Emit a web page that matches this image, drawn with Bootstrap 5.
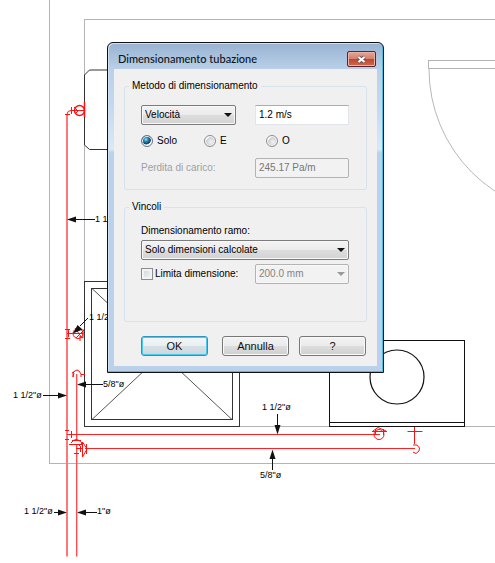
<!DOCTYPE html>
<html lang="it">
<head>
<meta charset="utf-8">
<meta name="viewport" content="width=device-width, initial-scale=1">
<title>Dimensionamento tubazione</title>
<link href="https://cdn.jsdelivr.net/npm/bootstrap@5.3.0/dist/css/bootstrap.min.css" rel="stylesheet">
<style>
  body { font-family: "Liberation Sans", Arial, sans-serif; font-size: 10px; line-height: 14px; color: #000; background: #fff; }
  .plan-wrap { min-height: 563px; }
  .plan text { font: 9px "Liberation Sans", sans-serif; fill: #000; white-space: pre; }
  .plan .crisp { shape-rendering: crispEdges; }
  /* window frame */
  .win { left: 107px; top: 42px; width: 277px; padding: 0 6px 6px; border: 1px solid #111; border-radius: 6px 6px 0 0;
    background: linear-gradient(#98b2d1 0, #bad1e9 27px, #c2d8ee 60px, #dbe8f5 106px, #b9d1ea 110px);
    box-shadow: inset -1px -1px 0 #3fc4e6, inset 1px 1px 0 #d3e2f1; }
  .win-title { height: 26px; padding: 4px 1px 0 4px; }
  .win-title h1 { font: 500 11px/16px Lato, "Noto Sans", sans-serif; color: #0c1420; padding-top: 4px; }
  .win-close { width: 29px; height: 16px; margin-top: 4px; border: 1px solid #5c2430; border-radius: 2px;
    background: linear-gradient(#e5a598 0, #d5806f 48%, #bd4630 52%, #cf6b4c 100%); box-shadow: inset 0 0 0 1px #e9b3a6; }
  .win-body { background: #f0f0f0; padding: 10px; }
  /* group boxes */
  .group { border: 1px solid #d8e2ea; border-radius: 3px; padding: 0 17px 0 16px; }
  .group legend { float: none; width: auto; font-size: 10px; line-height: 14px; margin: 0 0 0 -12px; padding: 0 3px; }
  .group-method { padding-top: 12px; padding-bottom: 11px; margin-bottom: 10px; }
  .group-limits { padding-top: 10px; padding-bottom: 37px; }
  .branch-row { margin: 2px 0 4px; }
  .pair { display: grid; grid-template-columns: minmax(0, 1fr) 94px; column-gap: 19px; align-items: center; }
  .choices { display: grid; grid-template-columns: 63px 62px 1fr; margin: 9px 0 10px; }
  .choices label, .limit label { display: flex; align-items: center; gap: 4px; }
  .limit label { gap: 2px; white-space: nowrap; }
  /* controls */
  .win .form-select, .win .form-control { height: 20px; min-height: 0; font-size: 10px; line-height: 14px; border-radius: 2px; color: #000; }
  .win .form-select { padding: 2px 16px 2px 3px; border: 1px solid #7b7b7b;
    background: linear-gradient(#f3f3f3, #ebebeb 48%, #dddddd 52%, #d2d2d2); box-shadow: inset 0 0 0 1px #f8f8f8; }
  .picker { position: relative; }
  .picker svg { position: absolute; right: 4px; top: 8px; pointer-events: none; }
  .win .form-select:disabled { color: #838383; border-color: #b3b3b3; background: #f2f2f2; opacity: 1; }
  .win .form-control { padding: 1px 2px 3px 3px; border: 1px solid #e2e5ea; border-top-color: #a9adb3; border-radius: 0; background: #fff; }
  .win .form-control:disabled { color: #777; background: #f2f2f2; border: 1px solid #b3b3b3; border-radius: 2px; opacity: 1; }
  .dim { color: #a0a0a0; }
  .win .form-check-input { width: 12px; height: 12px; margin: 0; flex: none; border: 1px solid #8d8d8d; background-color: #eee; box-shadow: inset 0 0 0 1px #f9f9f9; }
  .win .form-check-input[type=checkbox] { border-radius: 0; background-image: linear-gradient(135deg, #cfd3d8, #f6f6f6); box-shadow: inset 0 0 0 2px #f3f3f3; }
  .win .form-check-input[type=radio] { background-image: radial-gradient(circle at 60% 60%, #f4f4f4 0, #c9ced3 55%, #fafafa 60%); }
  .win .form-check-input[type=radio]:checked { border-color: #667380; background-color: #eef3f7;
    background-image: radial-gradient(circle at 40% 35%, #a5e4f6 0, #2583ae 25%, #123e63 52%, #eef3f7 60%); }
  .actions { display: grid; grid-template-columns: 81px 77px 67px; padding: 14px 0 0 17px; }
  .win .btn { width: 67px; height: 20px; padding: 0; font-size: 11px; line-height: 17px; color: #111; border: 1px solid #777; border-radius: 3px;
    background: linear-gradient(#f3f3f3, #ebebeb 48%, #dddddd 52%, #d0d0d0); box-shadow: inset 0 0 0 1px #f9f9f9; }
  .win .btn-default { border-color: #2c94bf; box-shadow: inset 0 0 0 1px #48c8ef; background: linear-gradient(#f3f6f7, #e9eff1 48%, #d6e0e5 52%, #cbd8de); }
</style>
<script src="https://cdn.jsdelivr.net/npm/bootstrap@5.3.0/dist/js/bootstrap.bundle.min.js"></script>
</head>
<body>
<main class="plan-wrap position-relative overflow-hidden d-flex vh-100">
  <svg class="plan w-100 h-100" role="img" aria-label="Pianta con tubazioni">
    <!-- walls -->
    <g class="crisp" fill="none" stroke="#b4b4b4">
      <path d="M49.500 0V463.500H3000M84.500 281V19.500H3000M239 426.500H3000"/>
      <path d="M3000 60.500H428.500V69M428.500 68.500H3000"/>
    </g>
    <path d="M429 69A146 146 0 0 0 575 215" fill="none" stroke="#b8b8b8"/>
    <!-- fixtures -->
    <g fill="none" stroke="#333">
      <path d="M120 70H89.500L84.500 75V145L89.500 149.500H120"/>
      <path d="M92 288.500L232 419.500M232 288.500L92 419.500" stroke="#555"/>
      <g class="crisp">
        <rect x="84.500" y="281.500" width="155" height="145" rx="1"/>
        <rect x="91.500" y="288.500" width="141" height="131"/>
        <rect x="329.500" y="340.500" width="135" height="86" fill="#fff" stroke="#111"/>
        <path d="M329 422.500H465" stroke="#111"/>
      </g>
      <circle cx="397" cy="377" r="27" stroke="#111" stroke-width="1.200"/>
    </g>
    <!-- pipes -->
    <g fill="none" stroke="#f22">
      <path d="M67 114V556.500" stroke="#f77" stroke-width="2"/>
      <path d="M76.700 374V440M76.700 444V556.500" stroke="#f44" stroke-width="1.300"/>
      <path d="M67 434.500H380M85 448.500H415" class="crisp"/>
      <g stroke="#f11">
        <path d="M65 114.500H70M67 114Q67.500 110.500 71 110.500H84M71.500 107V114"/>
        <circle cx="79.500" cy="110.500" r="5" stroke-width="1.500"/>
        <path d="M84.500 102V117" stroke-width="1.500"/><path d="M74 107L78 111L75 114"/>
        <path d="M65 329.500H70M65 338.500H70M67 333.500H83M68.500 330V337"/>
        <circle cx="78" cy="333.500" r="5"/><path d="M75 328L82 338M76 338L84 330M83 329V338L80 336V341"/>
        <path d="M73 377V373L75 371Q77 369 79 371L81 374V377M72 373L75 371M81 374.500H85M73 377L74 373"/>
        <path d="M65 430.500H69M65 439.500H69M71.500 431V438M69 444.500H83M72 440.500H81M71 443Q76 436 82 443"/>
        <path d="M76 448.500H82M74 453.500H79M82.500 442V457L87 449L82.500 442M79 446L83 442M86.500 444V454M80.500 446V452"/>
        <circle cx="379" cy="434.500" r="5"/><path d="M372 431.500H387M373 431L378 427.500L386 431M375.500 429V434M383.500 429V435"/>
        <path d="M414.500 427V444M407.500 431.500H422.500"/><path d="M413 445H417L419.500 448L419 451L416 453.500L413 452"/>
      </g>
    </g>
    <!-- callouts -->
    <g stroke="#111" fill="none" class="crisp">
      <path d="M76 219.500H95M86 384.500H103M43 395.500H58M54 512.500H58M86 512.500H97M277.500 414V426M272.500 458V470"/>
    </g>
    <path d="M80 326L88 318" stroke="#111"/>
    <path d="M67 219.500L76 216.500V222.500ZM77 384.500L86 381.500V387.500ZM67 395.500L58 392.500V398.500ZM67 512.500L58 509.500V515.500ZM77 512.500L86 509.500V515.500ZM277.500 434.500L274.500 425H280.500ZM272.500 449.500L269.500 459H275.500ZM73 333.500L77.500 325L82.500 329.500Z" fill="#111"/>
    <text x="95" y="222">1 1/2"ø</text>
    <text x="89" y="320">1 1/2"ø</text>
    <text x="103" y="387">5/8"ø</text>
    <text x="13" y="398">1 1/2"ø</text>
    <text x="24" y="514">1 1/2"ø</text>
    <text x="97" y="514">1"ø</text>
    <text x="262" y="410">1 1/2"ø</text>
    <text x="260" y="478">5/8"ø</text>
  </svg>

  <form class="win position-absolute" aria-labelledby="winTitle">
    <header class="win-title d-flex justify-content-between align-items-start">
      <h1 id="winTitle" class="m-0 text-nowrap">Dimensionamento tubazione</h1>
      <button type="button" class="win-close d-flex justify-content-center align-items-center p-0" aria-label="Chiudi">
        <svg width="11" height="9" viewBox="0 0 11 9"><path d="M2.500 2L8.500 7M8.500 2L2.500 7" stroke="#6b4a55" stroke-width="3.800"/><path d="M2.500 2L8.500 7M8.500 2L2.500 7" stroke="#fff" stroke-width="2.200"/></svg>
      </button>
    </header>
    <div class="win-body">
      <fieldset class="group group-method">
        <legend>Metodo di dimensionamento</legend>
        <div class="pair">
          <div class="picker">
            <select class="form-select" aria-label="Metodo"><option>Velocità</option></select>
            <svg width="8" height="4"><path d="M0 0H8L4 4Z" fill="#111"/></svg>
          </div>
          <input class="form-control" type="text" value="1.2 m/s" aria-label="Valore velocità">
        </div>
        <div class="choices">
          <label><input class="form-check-input" type="radio" name="op" checked>Solo</label>
          <label><input class="form-check-input" type="radio" name="op">E</label>
          <label><input class="form-check-input" type="radio" name="op">O</label>
        </div>
        <div class="pair">
          <label class="dim" for="loss">Perdita di carico:</label>
          <input id="loss" class="form-control" type="text" value="245.17 Pa/m" disabled>
        </div>
      </fieldset>
      <fieldset class="group group-limits">
        <legend>Vincoli</legend>
        <label class="d-block" for="branch">Dimensionamento ramo:</label>
        <div class="picker branch-row">
          <select id="branch" class="form-select"><option>Solo dimensioni calcolate</option></select>
          <svg width="8" height="4"><path d="M0 0H8L4 4Z" fill="#111"/></svg>
        </div>
        <div class="pair limit">
          <label><input class="form-check-input" type="checkbox">Limita dimensione:</label>
          <div class="picker">
            <select class="form-select" aria-label="Dimensione limite" disabled><option>200.0 mm</option></select>
            <svg width="8" height="4"><path d="M0 0H8L4 4Z" fill="#999"/></svg>
          </div>
        </div>
      </fieldset>
      <div class="actions">
        <button type="button" class="btn btn-default">OK</button>
        <button type="button" class="btn">Annulla</button>
        <button type="button" class="btn">?</button>
      </div>
    </div>
  </form>
</main>
</body>
</html>
